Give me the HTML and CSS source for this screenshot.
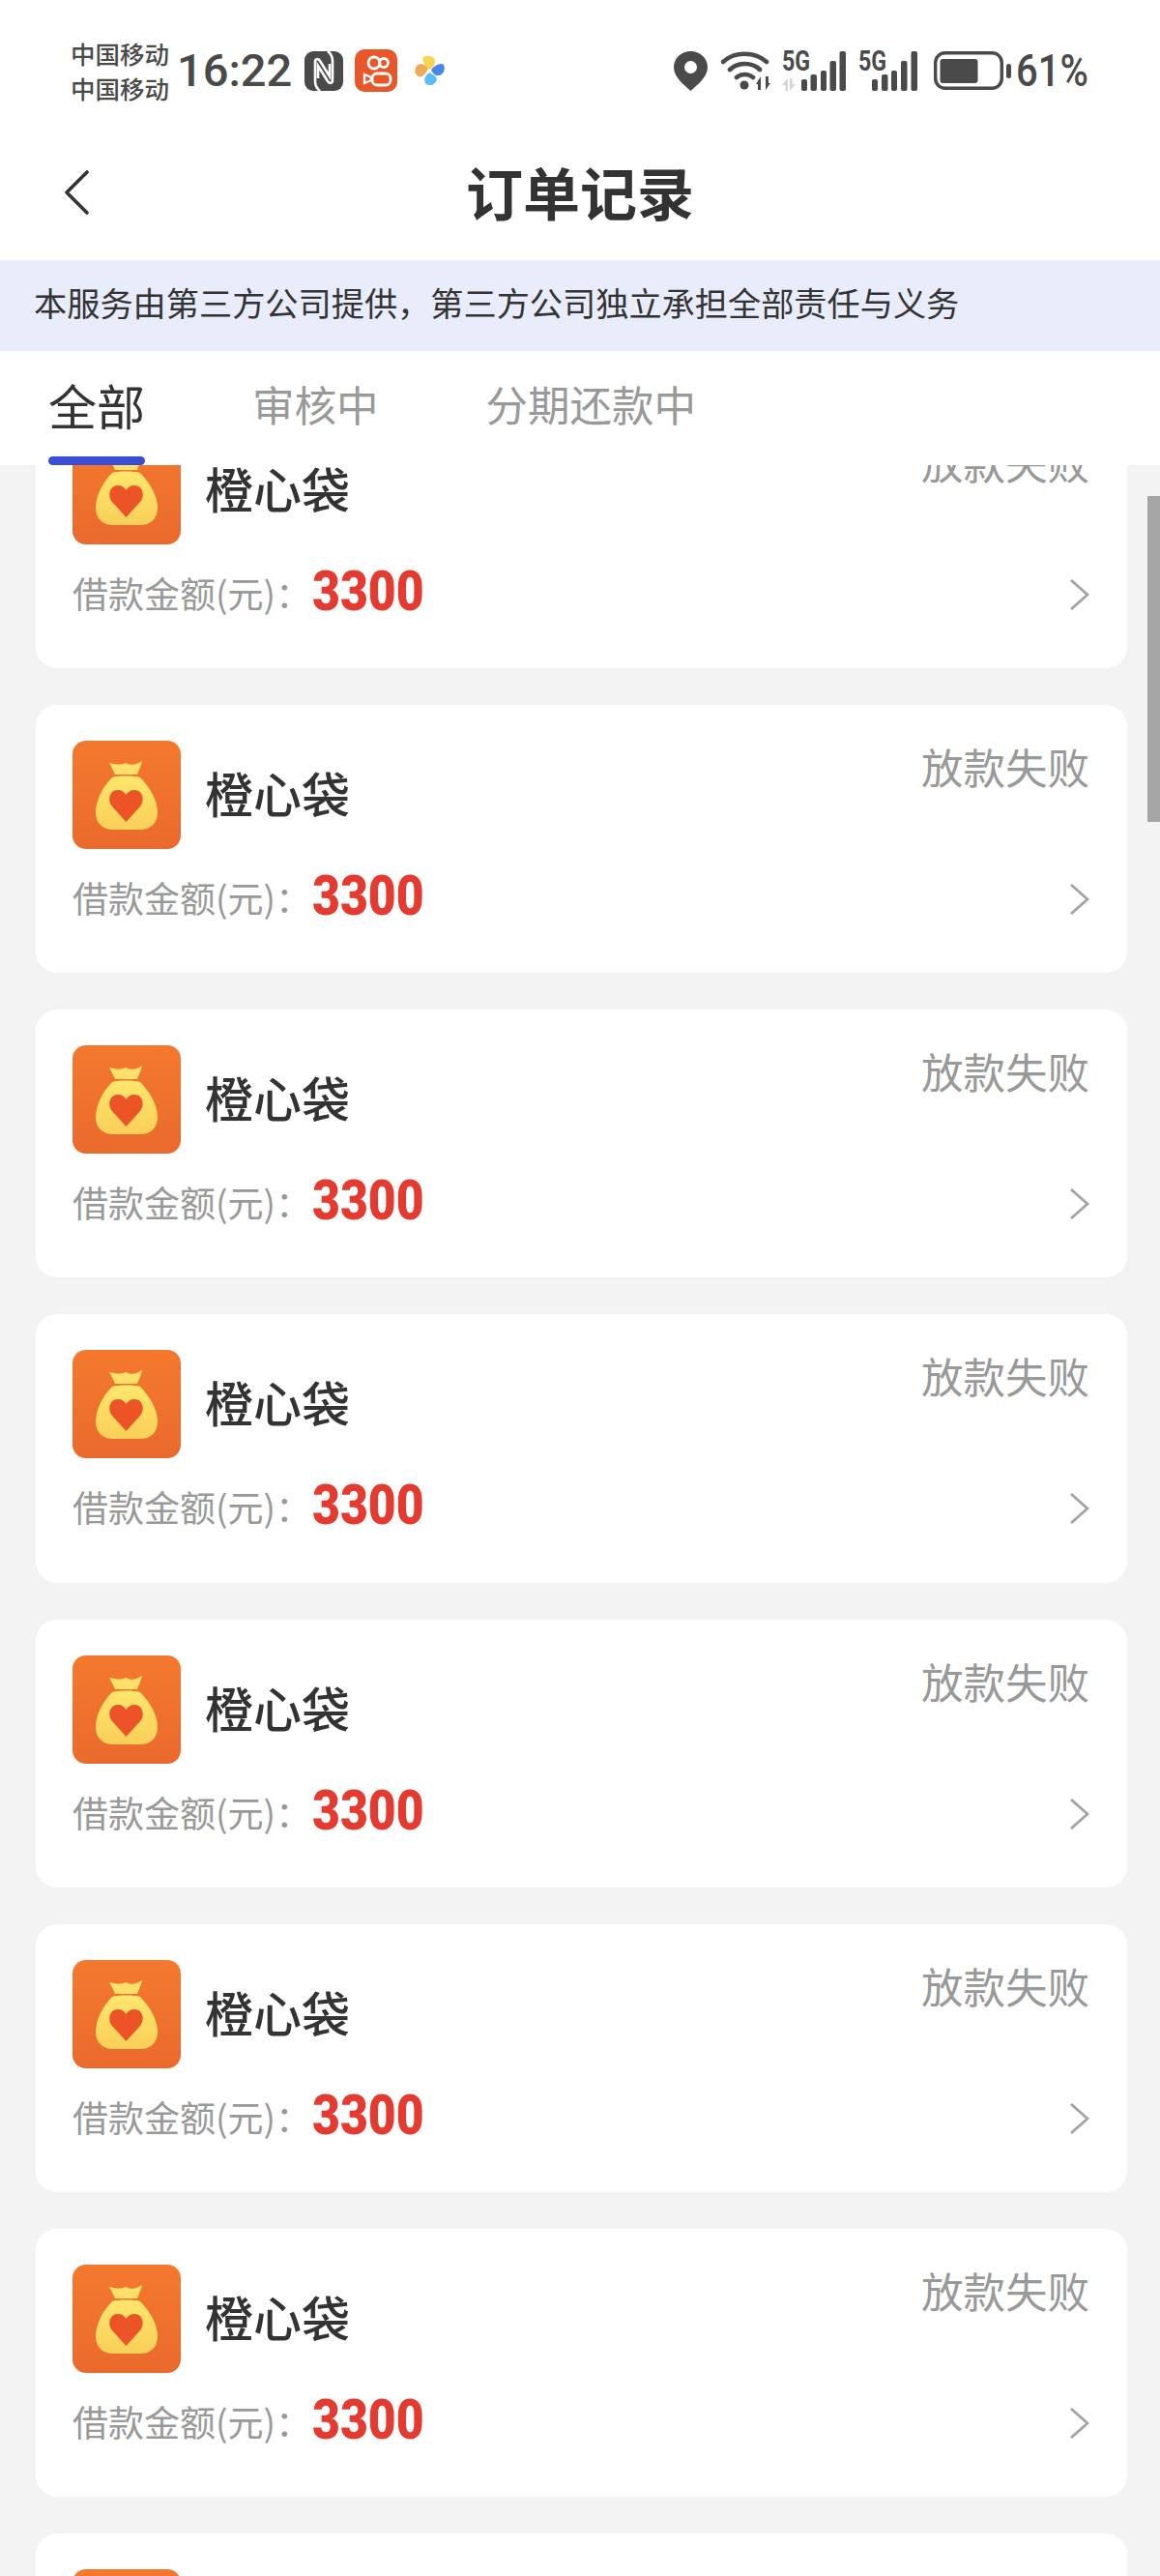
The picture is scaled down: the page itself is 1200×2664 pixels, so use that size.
FILE: index.html
```html
<!DOCTYPE html>
<html lang="zh-CN">

<head>
    <meta charset="UTF-8">
    <meta name="viewport" content="width=device-width, initial-scale=1.0">
    <title>订单记录</title>
    <link rel="stylesheet" href="styles.css">
</head>

<body>
    <svg class="defs" width="0" height="0">
        <defs>
            <linearGradient id="tile" x1="0" y1="0" x2="0" y2="1">
                <stop offset="0" stop-color="#f4792e" />
                <stop offset="1" stop-color="#ea6a2d" />
            </linearGradient>
            <linearGradient id="sack" x1="0" y1="0" x2="0" y2="1">
                <stop offset="0" stop-color="#ffe66c" />
                <stop offset="1" stop-color="#f9cf58" />
            </linearGradient>
            <symbol id="bag" viewBox="0 0 112 112">
                <rect width="112" height="112" rx="14" fill="url(#tile)" />
                <path d="M38 23C44 24 48 26 55 23C61 26 66 25 72 21C71 27 68 31 67 35H44C42 30 40 27 38 23Z" fill="#ffe06a" />
                <path d="M41 38C46 36 65 36 70 38C80 48 88 62 88 74C88 86 80 92 70 92H42C32 92 24 86 24 74C24 62 31 48 41 38Z" fill="url(#sack)" />
                <path d="M55.5 84L41 68C36 62 38 51 47 51C51 51 54 53 55.5 56C57 53 60 51 64 51C73 51 75 62 70 68Z" fill="#ec5326" />
            </symbol>
            <symbol id="chev" viewBox="0 0 20 32">
                <path d="M1 1L18 16L1 31" fill="none" stroke="#a3a3a3" stroke-width="2.8" />
            </symbol>
        </defs>
    </svg>

    <div class="status-bar">
        <div class="carrier">中国移动<br>中国移动</div>
        <span class="time">16:22</span>
        <svg class="ic-nfc" viewBox="0 0 40 41">
            <rect width="40" height="41" rx="9" fill="#4a4a4a" />
            <g fill="none" stroke="#fff" stroke-width="2.600">
                <path d="M16 41C12 38 11 35 11 31V11C11 8 14 7 16 10L26 26V13" />
                <path d="M24 0C28 3 29 6 29 10V30C29 33 26 34 24 31L14 15V28" />
            </g>
        </svg>
        <svg class="ic-ks" viewBox="0 0 44 44">
            <rect width="44" height="44" rx="10" fill="#e8562a" />
            <g fill="none" stroke="#fff" stroke-width="2.800">
                <circle cx="20" cy="14" r="6" />
                <circle cx="30" cy="14" r="4.500" />
                <rect x="18" y="25" width="19" height="12" rx="5" />
                <path d="M17 29L10 26V35L17 32Z" stroke-width="2.400" />
            </g>
        </svg>
        <svg class="ic-fan" viewBox="0 0 31 32">
            <path d="M9 2C13 -1 22 1 21 8C20 12 17 13 15.500 15C12 12 7 7 9 2Z" fill="#fbd44f" />
            <path d="M1 13C3 8 10 8 14 14C12 19 7 24 4 22C0 20 0 16 1 13Z" fill="#eeaa55" />
            <path d="M17 15C20 11 27 7 30 10C32 14 30 20 25 21C21 22 18 18 17 15Z" fill="#4a86e8" />
            <path d="M15.500 18C18 20 22 21 23 25C22 31 14 33 11 29C9 25 11 20 15.500 18Z" fill="#5cbcf5" />
        </svg>

        <svg class="ic-loc" viewBox="0 0 35 41">
            <path d="M17.500 41C11 35 0 27 0 16.500C0 7 8 0 17.500 0S35 7 35 16.500C35 27 24 35 17.500 41Z" fill="#4a4a4a" />
            <circle cx="17.500" cy="16.500" r="6.500" fill="#fff" />
        </svg>
        <svg class="ic-wifi" viewBox="0 0 51 40">
            <g fill="none" stroke="#4a4a4a" stroke-width="4.600" stroke-linecap="round">
                <path d="M2 11C14 0 35 0 47 11" />
                <path d="M9 19C17 11 32 11 40 19" />
                <path d="M16 27C21 23 28 23 33 27" />
            </g>
            <circle cx="24" cy="35" r="4.500" fill="#4a4a4a" />
            <path d="M36 34L41 26V40H38V34ZM51 33L46 40V26H49V33Z" fill="#4a4a4a" />
        </svg>
        <div class="signal sig-one">
            <span class="net">5G</span>
            <svg viewBox="0 0 66 41">
                <path d="M0 35L6 28V41H3.500V35ZM14 34L8 41V28H10.500V34Z" fill="#d4d4d4" />
                <g fill="#4a4a4a">
                    <rect x="20" y="29" width="6" height="12" rx="2" />
                    <rect x="29.500" y="24" width="6.500" height="17" rx="2" />
                    <rect x="40" y="20" width="6" height="21" rx="2" />
                    <rect x="49.500" y="10" width="6.500" height="31" rx="2" />
                    <rect x="59.500" y="0" width="6.500" height="41" rx="2" />
                </g>
            </svg>
        </div>
        <div class="signal sig-two">
            <span class="net">5G</span>
            <svg viewBox="0 0 61 41">
                <g fill="#4a4a4a">
                    <rect x="14" y="29" width="6" height="12" rx="2" />
                    <rect x="24" y="24" width="6.500" height="17" rx="2" />
                    <rect x="34" y="20" width="6" height="21" rx="2" />
                    <rect x="44" y="10" width="6.500" height="31" rx="2" />
                    <rect x="54.500" y="0" width="6.500" height="41" rx="2" />
                </g>
            </svg>
        </div>
        <svg class="ic-bat" viewBox="0 0 80 40">
            <rect x="1.700" y="1.700" width="68.600" height="36.600" rx="10" fill="none" stroke="#4a4a4a" stroke-width="3.400" />
            <rect x="6.500" y="8" width="39" height="25" rx="3" fill="#4a4a4a" />
            <rect x="75" y="13" width="5" height="15" rx="2.500" fill="#4a4a4a" />
        </svg>
        <span class="pct">61%</span>
    </div>

    <div class="nav-bar">
        <svg class="back" viewBox="0 0 26 46">
            <path d="M24 2L3 23L24 44" fill="none" stroke="#333" stroke-width="3.600" stroke-linecap="round" stroke-linejoin="round" />
        </svg>
        <h1>订单记录</h1>
    </div>

    <div class="notice">本服务由第三方公司提供，第三方公司独立承担全部责任与义务</div>

    <div class="tabs">
        <div class="tab active">全部</div>
        <div class="tab">审核中</div>
        <div class="tab">分期还款中</div>
    </div>

    <div class="order-list">
        <div class="scrollbar"></div>
        <div class="orders">
            <div class="order">
                <div class="order-top">
                    <svg class="logo"><use href="#bag" /></svg>
                    <span class="name">橙心袋</span>
                    <span class="state">放款失败</span>
                </div>
                <div class="order-bottom">
                    <span class="label">借款金额(元)：</span><span class="amount">3300</span>
                    <svg class="arrow"><use href="#chev" /></svg>
                </div>
            </div>
            <div class="order">
                <div class="order-top">
                    <svg class="logo"><use href="#bag" /></svg>
                    <span class="name">橙心袋</span>
                    <span class="state">放款失败</span>
                </div>
                <div class="order-bottom">
                    <span class="label">借款金额(元)：</span><span class="amount">3300</span>
                    <svg class="arrow"><use href="#chev" /></svg>
                </div>
            </div>
            <div class="order">
                <div class="order-top">
                    <svg class="logo"><use href="#bag" /></svg>
                    <span class="name">橙心袋</span>
                    <span class="state">放款失败</span>
                </div>
                <div class="order-bottom">
                    <span class="label">借款金额(元)：</span><span class="amount">3300</span>
                    <svg class="arrow"><use href="#chev" /></svg>
                </div>
            </div>
            <div class="order">
                <div class="order-top">
                    <svg class="logo"><use href="#bag" /></svg>
                    <span class="name">橙心袋</span>
                    <span class="state">放款失败</span>
                </div>
                <div class="order-bottom">
                    <span class="label">借款金额(元)：</span><span class="amount">3300</span>
                    <svg class="arrow"><use href="#chev" /></svg>
                </div>
            </div>
            <div class="order">
                <div class="order-top">
                    <svg class="logo"><use href="#bag" /></svg>
                    <span class="name">橙心袋</span>
                    <span class="state">放款失败</span>
                </div>
                <div class="order-bottom">
                    <span class="label">借款金额(元)：</span><span class="amount">3300</span>
                    <svg class="arrow"><use href="#chev" /></svg>
                </div>
            </div>
            <div class="order">
                <div class="order-top">
                    <svg class="logo"><use href="#bag" /></svg>
                    <span class="name">橙心袋</span>
                    <span class="state">放款失败</span>
                </div>
                <div class="order-bottom">
                    <span class="label">借款金额(元)：</span><span class="amount">3300</span>
                    <svg class="arrow"><use href="#chev" /></svg>
                </div>
            </div>
            <div class="order">
                <div class="order-top">
                    <svg class="logo"><use href="#bag" /></svg>
                    <span class="name">橙心袋</span>
                    <span class="state">放款失败</span>
                </div>
                <div class="order-bottom">
                    <span class="label">借款金额(元)：</span><span class="amount">3300</span>
                    <svg class="arrow"><use href="#chev" /></svg>
                </div>
            </div>
            <div class="order">
                <div class="order-top">
                    <svg class="logo"><use href="#bag" /></svg>
                    <span class="name">橙心袋</span>
                    <span class="state">放款失败</span>
                </div>
                <div class="order-bottom">
                    <span class="label">借款金额(元)：</span><span class="amount">3300</span>
                    <svg class="arrow"><use href="#chev" /></svg>
                </div>
            </div>
        </div>
    </div>
</body>

</html>
```

FILE: styles.css
```css
/* Page */
body {
    margin: 0;
    width: 1200px;
    height: 2664px;
    overflow: hidden;
    background: #fff;
    color: #333;
    font-family: "Noto Sans CJK SC", Roboto, sans-serif;
}

.defs {
    position: absolute;
}

/* Status bar */
.status-bar {
    display: flex;
    align-items: center;
    height: 72px;
    padding: 37px 0 0 73px;
    color: #4a4a4a;
}

.status-bar svg {
    flex-shrink: 0;
}

.carrier {
    width: 102px;
    font-size: 25.500px;
    font-weight: 500;
    line-height: 36px;
    white-space: nowrap;
}

.time,
.pct {
    display: inline-block;
    font-family: Roboto, sans-serif;
    font-size: 47px;
    font-weight: 500;
    line-height: 50px;
    white-space: nowrap;
    transform-origin: left center;
}

.time {
    width: 116px;
    margin-left: 8px;
}

.pct {
    width: 74px;
    margin-left: 5px;
    transform: scaleX(0.85);
}

.ic-nfc {
    width: 40px;
    height: 41px;
    margin-left: 16px;
}

.ic-ks {
    width: 44px;
    height: 44px;
    margin-left: 12px;
}

.ic-fan {
    width: 31px;
    height: 32px;
    margin-left: 18px;
}

.ic-loc {
    width: 35px;
    height: 41px;
    margin-left: 237px;
}

.ic-wifi {
    width: 51px;
    height: 40px;
    margin-left: 14px;
}

.signal {
    position: relative;
    height: 41px;
    flex-shrink: 0;
}

.signal svg {
    display: block;
    width: 100%;
    height: 41px;
}

.sig-one {
    width: 66px;
    margin-left: 12px;
}

.sig-two {
    width: 61px;
    margin-left: 13px;
}

.net {
    position: absolute;
    left: 0;
    top: 0;
    font-family: Roboto, sans-serif;
    font-size: 29px;
    font-weight: 700;
    line-height: 21px;
    color: #4a4a4a;
    transform: scaleX(0.8);
    transform-origin: left top;
}

.ic-bat {
    width: 80px;
    height: 40px;
    margin-left: 17px;
}

/* Title row */
.nav-bar {
    position: relative;
    height: 140px;
    padding-top: 20px;
    display: flex;
    align-items: center;
    justify-content: center;
}

.nav-bar h1 {
    margin: 0 0 4px;
    font-size: 59px;
    font-weight: 700;
    color: #333;
}

.back {
    position: absolute;
    left: 66px;
    top: 67px;
    width: 26px;
    height: 46px;
}

/* Notice */
.notice {
    height: 94px;
    line-height: 87px;
    padding-left: 35px;
    background: #e9ecfb;
    font-size: 34.200px;
    color: #333;
    white-space: nowrap;
}

/* Tabs */
.tabs {
    position: relative;
    display: flex;
    align-items: center;
    gap: 111px;
    height: 118px;
    padding: 0 0 8px 50px;
    box-sizing: border-box;
    background: #fff;
    font-size: 43.500px;
    color: #999;
}

.tab {
    position: relative;
    line-height: 60px;
}

.tab.active {
    font-size: 50px;
    color: #333;
}

.tab.active::after {
    content: "";
    position: absolute;
    left: 0;
    right: 0;
    bottom: -33px;
    height: 9px;
    border-radius: 5px;
    background: #3a4ed5;
}

/* Orders */
.order-list {
    position: relative;
    height: 2183px;
    overflow: hidden;
    background: #f3f3f3;
}

.scrollbar {
    position: absolute;
    right: 0;
    top: 32px;
    width: 13px;
    height: 337px;
    background: #a6a6a6;
}

.orders {
    display: flex;
    flex-direction: column;
    gap: 38px;
    margin-top: -67px;
    padding: 0 34px 0 37px;
}

.order {
    height: 277.170px;
    padding: 37px 37px 0 38px;
    box-sizing: border-box;
    background: #fff;
    border-radius: 22px;
    flex-shrink: 0;
}

.order-top {
    display: flex;
    height: 112px;
    align-items: center;
}

.logo {
    width: 112px;
    height: 112px;
    flex-shrink: 0;
}

.name {
    margin: 0 0 6px 25px;
    font-size: 50px;
    font-weight: 500;
    color: #333;
}

.state {
    align-self: flex-start;
    margin: -3px 2px 0 auto;
    font-size: 43.500px;
    line-height: 60px;
    color: #999;
}

.order-bottom {
    display: flex;
    align-items: center;
    height: 72px;
    margin-top: 12px;
}

.label {
    width: 248px;
    padding-top: 4px;
    font-size: 37px;
    color: #999;
    white-space: nowrap;
}

.amount {
    font-family: Roboto, sans-serif;
    font-size: 58px;
    font-weight: 900;
    color: #e53a2f;
    display: inline-block;
    transform: scaleX(0.86);
    transform-origin: left center;
}

.arrow {
    width: 20px;
    height: 32px;
    margin: 8px 2px 0 auto;
}
```
